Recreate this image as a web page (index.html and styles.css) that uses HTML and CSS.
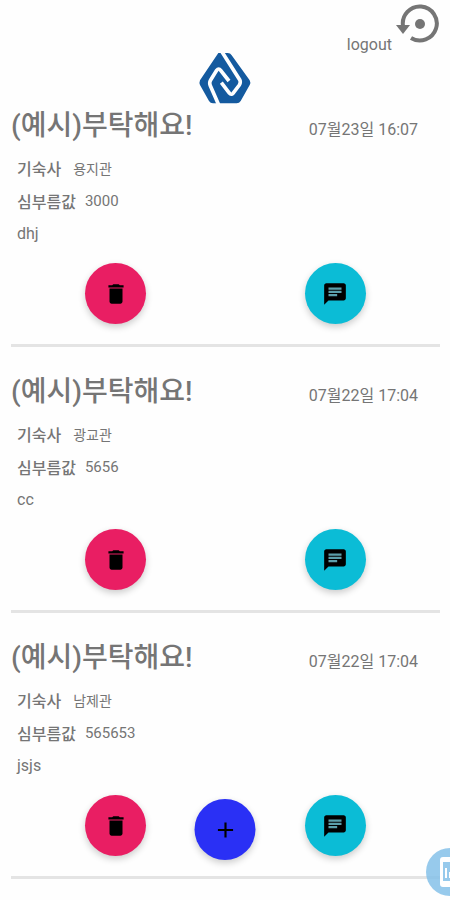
FILE: index.html
```html
<!DOCTYPE html>
<html lang="ko">
<head>
  <meta charset="UTF-8" />
  <title>부탁해요</title>
  <meta name="viewport" content="width=device-width, initial-scale=1.0" />
  <link rel="stylesheet" href="styles.css">
</head>
<body>
  <!-- 공용 아이콘 -->
  <svg class="sprite" aria-hidden="true">
    <symbol id="icon-delete" viewBox="0 0 24 24">
      <path d="M6 19c0 1.100.900 2 2 2h8c1.100 0 2-.900 2-2V7H6v12zM19 4h-3.500l-1-1h-5l-1 1H5v2h14V4z" />
    </symbol>
    <symbol id="icon-chat" viewBox="0 0 24 24">
      <path d="M20 2H4c-1.100 0-2 .900-2 2v18l4-4h14c1.100 0 2-.900 2-2V4c0-1.100-.900-2-2-2z" />
      <path class="chat-lines" d="M6 6h12v2H6zM6 9h12v2H6zM6 12h8v2H6z" />
    </symbol>
  </svg>

  <header class="header">
    <svg class="logo" viewBox="6 8 156 154" role="img" aria-label="로고">
      <path class="logo-shape" d="M64 10H92Q100 10 104 17L158 92Q162 99 158 106L131 154Q127 161 119 161H48Q40 161 36 154L9 106Q6 99 9 92Z" />
      <path class="logo-line" d="M72 2L128 90Q132 98 127 106L108 131Q103 137 97 130L73 99" />
      <path class="logo-line" d="M67 170L40 108Q36 99 41 91L59 62Q65 54 71 62L96 94" />
    </svg>
    <a class="logout" href="#">logout</a>
    <button class="refresh" type="button" aria-label="새로고침">
      <svg viewBox="0 0 44 40">
        <path class="arc" d="M7 22A17 17 0 1 1 15 34" />
        <path d="M0 21h14l-7 9z" />
        <circle cx="24" cy="20" r="5" />
      </svg>
    </button>
  </header>

  <main class="list">
    <article class="item">
      <div class="item-head">
        <h2>(예시)부탁해요!</h2>
        <time>07월23일 16:07</time>
      </div>
      <div class="item-info">
        <p><strong>기숙사</strong><span class="dorm">용지관</span></p>
        <p><strong>심부름값</strong><span class="price">3000</span></p>
        <p>dhj</p>
      </div>
      <div class="item-actions">
        <button class="fab delete" type="button" aria-label="삭제"><svg><use href="#icon-delete" /></svg></button>
        <button class="fab chat" type="button" aria-label="채팅"><svg><use href="#icon-chat" /></svg></button>
      </div>
    </article>

    <article class="item">
      <div class="item-head">
        <h2>(예시)부탁해요!</h2>
        <time>07월22일 17:04</time>
      </div>
      <div class="item-info">
        <p><strong>기숙사</strong><span class="dorm">광교관</span></p>
        <p><strong>심부름값</strong><span class="price">5656</span></p>
        <p>cc</p>
      </div>
      <div class="item-actions">
        <button class="fab delete" type="button" aria-label="삭제"><svg><use href="#icon-delete" /></svg></button>
        <button class="fab chat" type="button" aria-label="채팅"><svg><use href="#icon-chat" /></svg></button>
      </div>
    </article>

    <article class="item">
      <div class="item-head">
        <h2>(예시)부탁해요!</h2>
        <time>07월22일 17:04</time>
      </div>
      <div class="item-info">
        <p><strong>기숙사</strong><span class="dorm">남제관</span></p>
        <p><strong>심부름값</strong><span class="price">565653</span></p>
        <p>jsjs</p>
      </div>
      <div class="item-actions">
        <button class="fab delete" type="button" aria-label="삭제"><svg><use href="#icon-delete" /></svg></button>
        <button class="fab chat" type="button" aria-label="채팅"><svg><use href="#icon-chat" /></svg></button>
      </div>
    </article>
  </main>

  <button class="fab add" type="button" aria-label="글쓰기">
    <svg viewBox="0 0 24 24"><path d="M19 13h-6v6h-2v-6H5v-2h6V5h2v6h6z" /></svg>
  </button>

  <button class="bubble" type="button" aria-label="화면 도구">
    <svg viewBox="0 0 48 48">
      <path fill-rule="evenodd" d="M17 9h16q3 0 3 3v24q0 3-3 3H17q-3 0-3-3V12q0-3 3-3zM17 14v19h16V14z" />
      <path d="M19 20h2v10h-2zM23 24h2v6h-2zM27 20h2v10h-2z" />
    </svg>
  </button>
</body>
</html>
```

FILE: styles.css
```css
*, *::before, *::after {
  box-sizing: border-box;
}

body {
  margin: 0;
  min-height: 100vh;
  overflow-x: hidden;
  font-family: Roboto, "Noto Sans CJK KR", sans-serif;
  font-size: 16px;
  color: #757575;
  background: #fefefe;
}

h2, p {
  margin: 0;
}

button {
  padding: 0;
  border: none;
  cursor: pointer;
}

svg {
  display: block;
}

.sprite {
  display: none;
}

.header {
  display: grid;
  grid-template-columns: 1fr 52px 1fr;
  height: 81px;
  padding-top: 4px;
}

.logo {
  grid-column: 2;
  width: 52px;
  height: 52px;
  margin-top: 48px;
}

.logo-shape {
  fill: #145a9f;
}

.logo-line {
  fill: none;
  stroke: #fefefe;
  stroke-width: 11;
}

.logout {
  grid-column: 3;
  grid-row: 1;
  justify-self: end;
  margin: 31px 58px 0 0;
  line-height: 20px;
  color: inherit;
  text-decoration: none;
}

.refresh {
  grid-column: 3;
  grid-row: 1;
  justify-self: end;
  align-self: start;
  width: 44px;
  height: 40px;
  margin-right: 10px;
  background: none;
}

.refresh svg {
  width: 44px;
  height: 40px;
  fill: #757575;
}

.refresh .arc {
  fill: none;
  stroke: #757575;
  stroke-width: 4;
}

.list {
  padding: 0 10px 0 11px;
}

.item {
  padding: 26px 0 20px;
  border-bottom: 3px solid #e4e4e4;
}

.item-head {
  display: flex;
  align-items: center;
  justify-content: space-between;
  height: 38px;
  padding-right: 22px;
}

.item-head h2 {
  font-size: 28px;
  font-weight: 500;
  line-height: 38px;
}

.item-head time {
  padding-top: 3px;
}

.item-info {
  padding: 6px 6px 13px;
}

.item-info p {
  display: flex;
  align-items: center;
  height: 33px;
}

.item-info strong {
  font-weight: 500;
}

.dorm {
  margin-left: 12px;
  font-size: 14px;
}

.price {
  margin-left: 9px;
  font-size: 15px;
}

.item-actions {
  display: grid;
  grid-template-columns: 1fr 1fr;
  justify-items: center;
  margin: 0 -5px;
}

.fab {
  display: flex;
  align-items: center;
  justify-content: center;
  width: 61px;
  height: 61px;
  border-radius: 50%;
  box-shadow: 0 3px 7px rgba(0, 0, 0, 0.2);
}

.fab svg {
  width: 26px;
  height: 26px;
}

.delete {
  background: #e91e63;
}

.chat {
  background: #0bbcd6;
}

.chat-lines {
  fill: #5c9fab;
}

.add {
  position: fixed;
  bottom: 40px;
  left: 50%;
  transform: translateX(-50%);
  background: #2a30f5;
}

.bubble {
  position: fixed;
  right: -24px;
  bottom: 4px;
  width: 48px;
  height: 48px;
  border-radius: 50%;
  background: rgba(133, 193, 233, 0.85);
}

.bubble svg {
  width: 48px;
  height: 48px;
  fill: #fff;
}
```
